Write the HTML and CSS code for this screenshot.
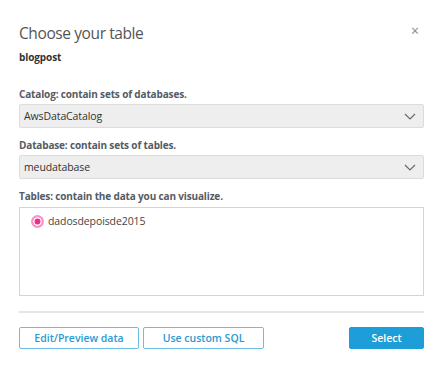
FILE: index.html
```html
<!DOCTYPE html>
<html lang="en">

<head>
    <meta charset="UTF-8">
    <title>Choose your table</title>
    <link rel="stylesheet" href="styles.css">
</head>

<body>
    <div class="dialog">
        <div class="header">
            <h1 class="title">Choose your table</h1>
            <span class="close">&times;</span>
        </div>
        <div class="subtitle">blogpost</div>

        <div class="label first">Catalog: contain sets of databases.</div>
        <div class="select">
            <span>AwsDataCatalog</span>
            <svg class="caret" width="12" height="7" viewBox="0 0 12 7"><path d="M1 1l5 5 5-5" fill="none" stroke="#666" stroke-width="1.1"/></svg>
        </div>

        <div class="label">Database: contain sets of tables.</div>
        <div class="select">
            <span>meudatabase</span>
            <svg class="caret" width="12" height="7" viewBox="0 0 12 7"><path d="M1 1l5 5 5-5" fill="none" stroke="#666" stroke-width="1.1"/></svg>
        </div>

        <div class="label">Tables: contain the data you can visualize.</div>
        <div class="tables">
            <div class="option">
                <span class="radio"></span>
                <span>dadosdepoisde2015</span>
            </div>
        </div>

        <div class="divider"></div>

        <div class="footer">
            <button class="btn">Edit/Preview data</button>
            <button class="btn">Use custom SQL</button>
            <button class="btn primary">Select</button>
        </div>
    </div>
</body>

</html>
```

FILE: styles.css
```css
* {
    margin: 0;
    padding: 0;
    box-sizing: border-box;
}

body {
    background: #fff;
    font-family: "Open Sans", "Noto Sans", sans-serif;
    color: #545b64;
}

.dialog {
    width: 444px;
    padding: 23px 20px 0 19px;
}

.header {
    display: flex;
    justify-content: space-between;
    align-items: center;
    height: 20px;
}

.title {
    font-size: 15.5px;
    font-weight: normal;
    line-height: 20px;
    letter-spacing: -0.4px;
    color: #555;
}

.close {
    font-size: 14px;
    color: #888;
    margin-right: 5px;
    line-height: 20px;
    margin-top: -4px;
}

.subtitle {
    margin-top: 7px;
    font-size: 10px;
    font-weight: bold;
    line-height: 14px;
    letter-spacing: -0.1px;
    color: #333;
}

.label {
    margin-top: 10px;
    font-size: 10px;
    font-weight: bold;
    line-height: 14px;
    letter-spacing: -0.15px;
    color: #545b64;
}

.label.first {
    margin-top: 23px;
}

.select {
    margin-top: 3px;
    height: 24px;
    background: #eeeeee;
    border: 1px solid #dcdcdc;
    border-radius: 2px;
    display: flex;
    align-items: center;
    justify-content: space-between;
    padding: 0 7px 0 4px;
    font-size: 10.5px;
    letter-spacing: -0.1px;
    color: #333;
}

.tables {
    margin-top: 4px;
    height: 89px;
    border: 1px solid #d5d5d5;
    padding: 6px 11px;
}

.option {
    display: flex;
    align-items: center;
    gap: 4px;
    font-size: 10.5px;
    letter-spacing: -0.1px;
    color: #444;
}

.radio {
    width: 13px;
    height: 13px;
    border-radius: 50%;
    border: 2px solid #f794c4;
    background: #ea2f8c;
    box-shadow: inset 0 0 0 1.5px #fff;
}

.divider {
    margin-top: 15px;
    height: 2px;
    background: #e6e6e6;
}

.footer {
    margin-top: 14px;
    display: flex;
    gap: 4px;
}

.btn {
    height: 22px;
    width: 120px;
    font-family: inherit;
    font-size: 10.5px;
    font-weight: 600;
    color: #2a9ad2;
    background: #fff;
    border: 1px solid #6cbde6;
    border-radius: 2px;
}

.btn + .btn {
    width: 121px;
}

.btn.primary {
    width: 75px;
    margin-left: auto;
    background: #1e9ed8;
    border-color: #1e9ed8;
    color: #fff;
}
```
